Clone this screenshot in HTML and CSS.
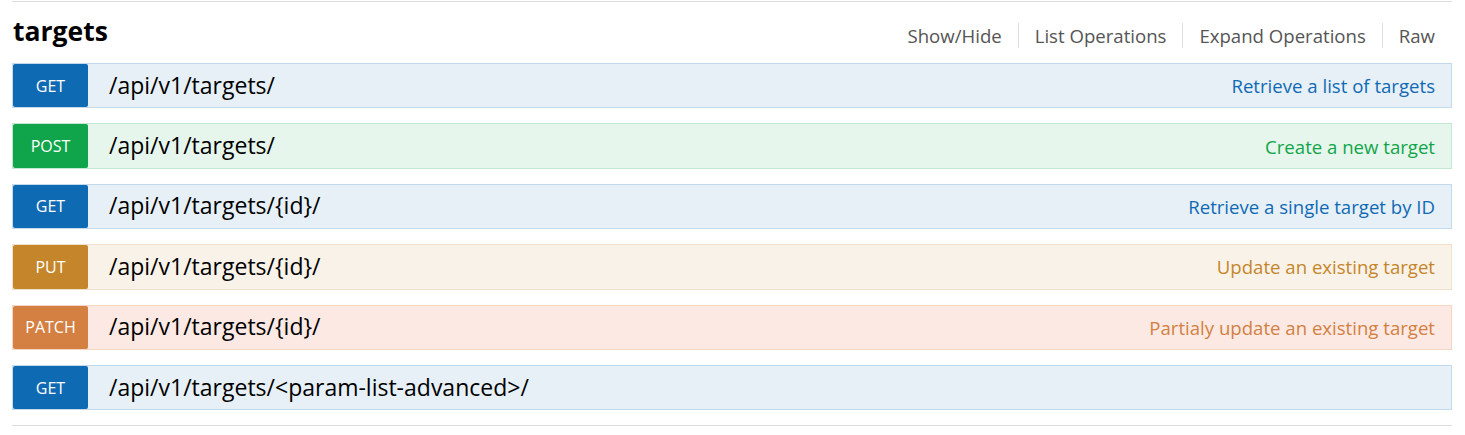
FILE: index.html
```html
<!DOCTYPE html>
<html lang="en">

<head>
    <meta charset="UTF-8">
    <meta name="viewport" content="width=device-width, initial-scale=1.0">
    <title>targets</title>
    <link rel="stylesheet" href="styles.css">
</head>

<body>
    <div class="resource">
        <div class="heading">
            <h2>targets</h2>
            <ul class="options">
                <li><a href="#">Show/Hide</a></li>
                <li><a href="#">List Operations</a></li>
                <li><a href="#">Expand Operations</a></li>
                <li><a href="#">Raw</a></li>
            </ul>
        </div>
        <ul class="endpoints">
            <li class="op get">
                <span class="method">GET</span>
                <span class="path">/api/v1/targets/</span>
                <span class="desc">Retrieve a list of targets</span>
            </li>
            <li class="op post">
                <span class="method">POST</span>
                <span class="path">/api/v1/targets/</span>
                <span class="desc">Create a new target</span>
            </li>
            <li class="op get">
                <span class="method">GET</span>
                <span class="path">/api/v1/targets/{id}/</span>
                <span class="desc">Retrieve a single target by ID</span>
            </li>
            <li class="op put">
                <span class="method">PUT</span>
                <span class="path">/api/v1/targets/{id}/</span>
                <span class="desc">Update an existing target</span>
            </li>
            <li class="op patch">
                <span class="method">PATCH</span>
                <span class="path">/api/v1/targets/{id}/</span>
                <span class="desc">Partialy update an existing target</span>
            </li>
            <li class="op get">
                <span class="method">GET</span>
                <span class="path">/api/v1/targets/&lt;param-list-advanced&gt;/</span>
                <span class="desc"></span>
            </li>
        </ul>
    </div>
</body>

</html>
```

FILE: styles.css
```css
body {
    margin: 0;
    padding: 0;
    font-family: 'Open Sans', 'Noto Sans', sans-serif;
    background-color: white;
}

a {
    text-decoration: none;
    color: #555;
}

ul {
    list-style: none;
    margin: 0;
    padding: 0;
}

.resource {
    margin: 1px 13px 0 12px;
    border-top: 1px solid #ddd;
    border-bottom: 1px solid #ddd;
    padding-bottom: 15px;
}

.heading {
    display: flex;
    justify-content: space-between;
    align-items: center;
    height: 61px;
}

h2 {
    margin: 0 0 0 1px;
    font-size: 26.5px;
    font-weight: 700;
    color: black;
    position: relative;
    top: -2px;
}

.options {
    display: flex;
    padding-right: 17px;
    font-size: 18.6px;
    position: relative;
    top: 3px;
}

.options li {
    padding: 0 16px;
    border-left: 1px solid #ddd;
    line-height: 25px;
}

.options li:first-child {
    border-left: none;
}

.options li:last-child {
    padding-right: 0;
}

.endpoints {
    display: flex;
    flex-direction: column;
    gap: 15px;
}

.op {
    display: flex;
    align-items: center;
    height: 43.4px;
    border: 1px solid;
}

.method {
    width: 75px;
    align-self: stretch;
    display: flex;
    align-items: center;
    justify-content: center;
    color: white;
    font-size: 16px;
    border-radius: 2px;
}

.path {
    padding-left: 21px;
    font-size: 23px;
    color: black;
    position: relative;
    top: -1px;
}

.desc {
    margin-left: auto;
    padding-right: 16px;
    font-size: 18.6px;
}

.get {
    background-color: #e7f0f7;
    border-color: #c3d9ec;
}

.get .method {
    background-color: #0f6ab4;
}

.get .desc {
    color: #0f6ab4;
}

.post {
    background-color: #e7f6ec;
    border-color: #c3e8d1;
}

.post .method {
    background-color: #10a54a;
}

.post .desc {
    color: #10a54a;
}

.put {
    background-color: #f9f2e9;
    border-color: #f0e0ca;
}

.put .method {
    background-color: #c5862b;
}

.put .desc {
    color: #c5862b;
}

.patch {
    background-color: #fce9e3;
    border-color: #f5d5c3;
}

.patch .method {
    background-color: #d38042;
}

.patch .desc {
    color: #d38042;
}
```
